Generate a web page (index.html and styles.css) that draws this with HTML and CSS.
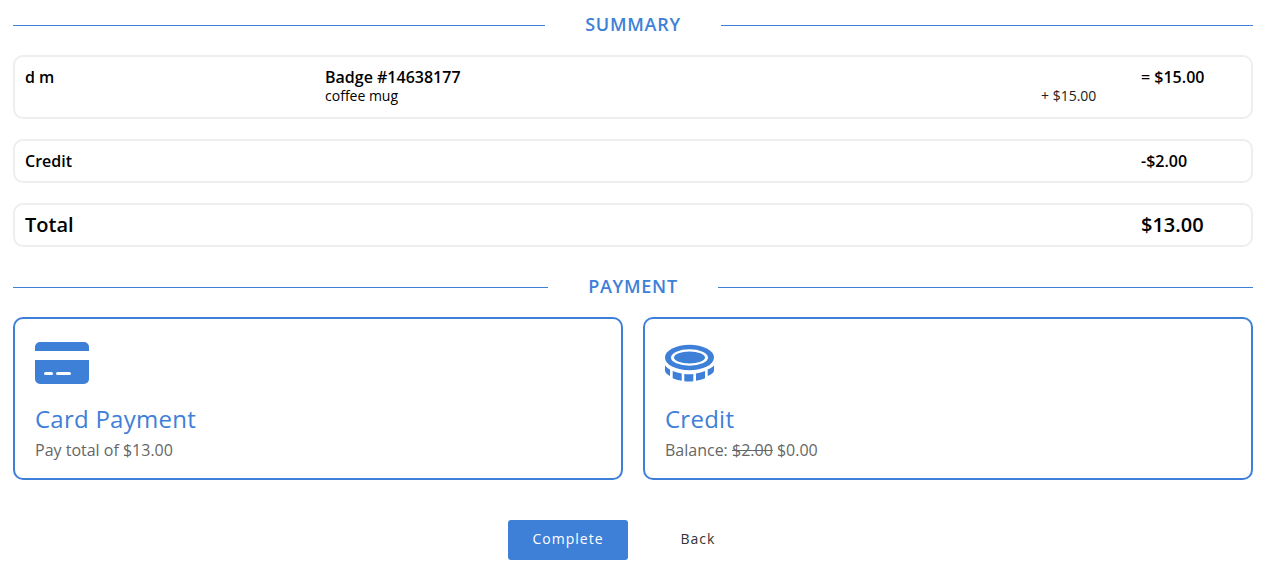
FILE: index.html
```html
<!DOCTYPE html>
<html lang="en">
<head>
<meta charset="utf-8">
<title>Summary</title>
<link rel="stylesheet" href="styles.css">
</head>
<body>
<main class="page">
  <div class="divider divider-summary"><span class="divider-label">SUMMARY</span></div>
  <section class="row row-item">
    <div class="col-name">d m</div>
    <div class="col-detail">
      <div class="badge">Badge #14638177</div>
      <div class="sub">coffee mug</div>
    </div>
    <div class="col-add">+ $15.00</div>
    <div class="col-amount">= $15.00</div>
  </section>
  <section class="row row-credit">
    <div class="col-name">Credit</div>
    <div class="col-amount">-$2.00</div>
  </section>
  <section class="row row-total">
    <div class="col-name">Total</div>
    <div class="col-amount">$13.00</div>
  </section>
  <div class="divider divider-payment"><span class="divider-label">PAYMENT</span></div>
  <div class="cards">
    <article class="card">
      <svg class="icon" width="54" height="42" viewBox="0 0 54 42"><path fill="#3e80d8" d="M0 9V5a5 5 0 0 1 5-5h44a5 5 0 0 1 5 5v4zM0 18h54v19a5 5 0 0 1-5 5H5a5 5 0 0 1-5-5z"/><rect fill="#fff" x="9" y="30" width="9" height="3" rx="1.500"/><rect fill="#fff" x="21" y="30" width="15" height="3" rx="1.500"/></svg>
      <h2 class="card-title">Card Payment</h2>
      <p class="card-text">Pay total of $13.00</p>
    </article>
    <article class="card">
      <svg class="icon" width="49" height="42" viewBox="0 0 49 42"><ellipse cx="24.500" cy="15.500" rx="24.500" ry="12.800" fill="#3e80d8"/><ellipse cx="24.500" cy="15.500" rx="18.500" ry="8.300" fill="#fff"/><ellipse cx="24.500" cy="15.500" rx="15.500" ry="6" fill="#3e80d8"/><path fill="#3e80d8" d="M0 23.500c1.500 1.800 3 3 5 4V34C2 32.500 0 30.500 0 28.500zM7.700 29c2.700 1 6 1.900 9 2.400v7.300c-3.500-.5-6.500-1.300-9-2.400zM19.300 32c3 .3 6 .3 9 0v7.200c-3 .3-6 .3-9 0zM31 31.400c3-.5 6.300-1.400 9-2.400v7.300c-2.500 1.100-5.500 1.900-9 2.400zM42.700 27.500c2.300-1 4.800-2.200 6.300-4v5c0 2-2.500 4-6.300 5.500z"/></svg>
      <h2 class="card-title">Credit</h2>
      <p class="card-text">Balance: <s>$2.00</s> $0.00</p>
    </article>
  </div>
  <div class="actions">
    <button class="btn btn-primary" type="button">Complete</button>
    <button class="btn btn-plain" type="button">Back</button>
  </div>
</main>
</body>
</html>
```
FILE: styles.css
```css
* { box-sizing: border-box; }
html, body { margin: 0; padding: 0; background: #fff; }
body { font-family: "Open Sans", sans-serif; color: #000; width: 1287px; height: 570px; overflow: hidden; }
.page { padding: 0 34px 0 13px; }
.divider { display: flex; align-items: center; height: 50px; color: #3e80d8; }
.divider::before, .divider::after { content: ""; flex: 1; height: 1px; background: #3e80d8; }
.divider-label { font-size: 18px; font-weight: 600; letter-spacing: .75px; padding: 0 40px 2px; line-height: 24px; }
.divider-payment { margin-top: 15px; height: 50px; margin-bottom: -1px; }
.row { display: flex; border: 2px solid #eee; border-radius: 10px; padding: 0 10px; }
.row-item { height: 64px; margin-top: 5px; padding-top: 10px; font-size: 16px; font-weight: 600; }
.row-credit { height: 44px; margin-top: 20px; align-items: center; font-size: 16px; font-weight: 600; }
.row-total { height: 44px; margin-top: 20px; align-items: center; font-size: 20px; font-weight: 600; line-height: 26px; }
.col-name { width: 300px; line-height: 20px; }
.col-detail { flex: 1; }
.badge { line-height: 20px; font-size: 16px; }
.sub { font-size: 14px; font-weight: 400; line-height: 17px; }
.col-add { width: 100px; font-size: 14px; font-weight: 400; color: #222; line-height: 17px; padding-top: 20px; }
.col-amount { width: 100px; margin-left: auto; line-height: 20px; }
.cards { display: grid; grid-template-columns: 610px 610px; gap: 20px; margin-top: 6px; }
.card { height: 163px; border: 2px solid #3e80d8; border-radius: 10px; padding: 23px 20px 0; }
.icon { display: block; }
.card-title { margin: 19px 0 0; font-size: 24px; font-weight: 400; color: #3e80d8; line-height: 32px; letter-spacing: .25px; }
.card-text { margin: 4px 0 0; font-size: 16px; color: #666; line-height: 22px; }
.actions { display: flex; justify-content: center; gap: 10px; margin-top: 40px; }
.btn { height: 40px; width: 120px; border: 0; border-radius: 3px; padding: 0 0 3px; font: 400 14px "Open Sans", sans-serif; letter-spacing: 1px; }
.btn-primary { background: #3e80d8; color: #fff; }
.btn-plain { background: transparent; color: #333; }
```
